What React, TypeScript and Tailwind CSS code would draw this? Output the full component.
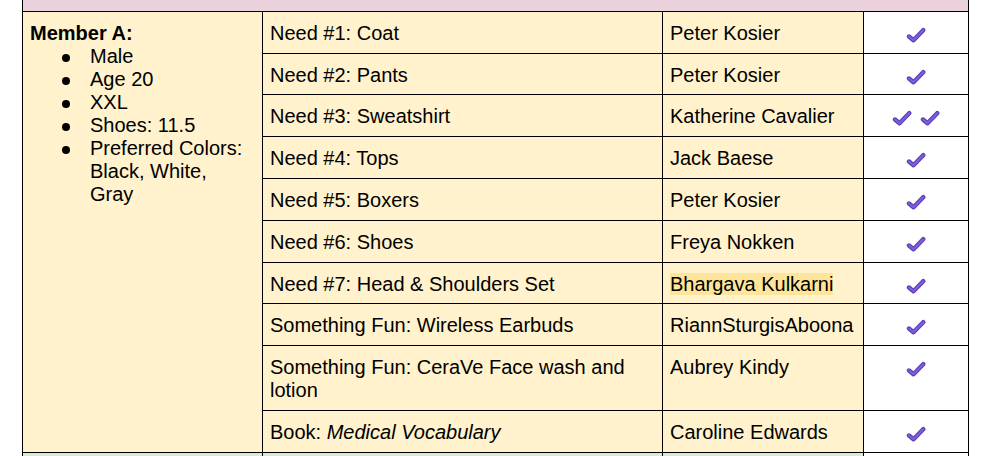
import React from "react";

type Row = {
  need: React.ReactNode;
  who: React.ReactNode;
  checks: number;
};

const rows: Row[] = [
  { need: "Need #1: Coat", who: "Peter Kosier", checks: 1 },
  { need: "Need #2: Pants", who: "Peter Kosier", checks: 1 },
  { need: "Need #3: Sweatshirt", who: "Katherine Cavalier", checks: 2 },
  { need: "Need #4: Tops", who: "Jack Baese", checks: 1 },
  { need: "Need #5: Boxers", who: "Peter Kosier", checks: 1 },
  { need: "Need #6: Shoes", who: "Freya Nokken", checks: 1 },
  {
    need: "Need #7: Head & Shoulders Set",
    who: <span className="bg-[#ffe599]">Bhargava Kulkarni</span>,
    checks: 1,
  },
  { need: "Something Fun: Wireless Earbuds", who: "RiannSturgisAboona", checks: 1 },
  { need: "Something Fun: CeraVe Face wash and lotion", who: "Aubrey Kindy", checks: 1 },
  {
    need: (
      <>
        Book: <em>Medical Vocabulary</em>
      </>
    ),
    who: "Caroline Edwards",
    checks: 1,
  },
];

function Check() {
  return (
    <svg width="20" height="16" viewBox="0 0 20 16" fill="none">
      <path
        d="M3 9.5L7.5 13.2L17.2 3.2"
        stroke="#5a3db4"
        strokeWidth="4.4"
        strokeLinecap="round"
        strokeLinejoin="round"
      />
      <path
        d="M3 9.5L7.5 13.2L17.2 3.2"
        stroke="#7d5fdc"
        strokeWidth="2.2"
        strokeLinecap="round"
        strokeLinejoin="round"
      />
    </svg>
  );
}

const edge = "border-r border-b border-black px-[7px]";
const cell = `${edge} pt-[10px] pb-[7.8px]`;
const details = ["Male", "Age 20", "XXL", "Shoes: 11.5", "Preferred Colors: Black, White, Gray"];

export default function App() {
  return (
    <div
      className="min-h-screen bg-white text-black text-[20px] leading-[23px] overflow-hidden"
      style={{ fontFamily: '"Liberation Sans", Arial, sans-serif' }}
    >
      <div className="ml-[22px] -mt-[30px] w-[947px] border-l border-black grid grid-cols-[240px_400px_201px_105px]">
        <div className={`${edge} pt-[5.5px] pb-[12.3px] col-span-4 bg-[#ead1dc]`}>Adopted Family: Clothing</div>

        <div className={`${cell} row-span-10 bg-[#fff2cc]`}>
          <div className="font-bold">Member A:</div>
          <ul>
            {details.map((d) => (
              <li key={d} className="flex">
                <span className="w-[60px] shrink-0 h-[23px] flex items-center justify-end pr-[20px] pt-[3px]">
                  <span className="size-[8px] rounded-full bg-black" />
                </span>
                <span>{d}</span>
              </li>
            ))}
          </ul>
        </div>

        {rows.map((r, i) => (
          <React.Fragment key={i}>
            <div className={`${cell} bg-[#fff2cc]`}>{r.need}</div>
            <div className={`${cell} bg-[#fff2cc]`}>{r.who}</div>
            <div className={`${cell} bg-white`}>
              <div className="h-[21px] flex items-end justify-center gap-[8px]">
                {Array.from({ length: r.checks }).map((_, k) => (
                  <Check key={k} />
                ))}
              </div>
            </div>
          </React.Fragment>
        ))}

        <div className={`${cell} bg-[#d9ead3]`}>Member B:</div>
        <div className={`${cell} bg-[#d9ead3]`}>Need #1: Jacket</div>
        <div className={`${cell} bg-[#d9ead3]`}>&nbsp;</div>
        <div className={`${cell} bg-white`}>&nbsp;</div>
      </div>
    </div>
  );
}
